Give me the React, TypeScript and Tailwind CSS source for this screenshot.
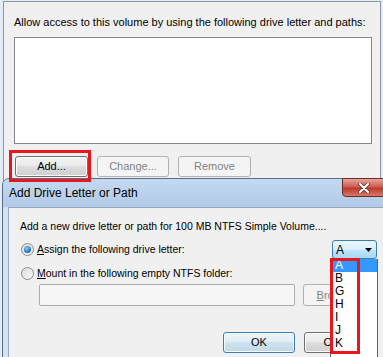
import React from 'react'

const btnBase =
  'flex items-center justify-center rounded-[3px] border text-[11px] leading-[13px]'
const btnNormal =
  'border-[#707070] bg-[linear-gradient(#f2f2f2,#ebebeb_50%,#dddddd_50%,#cfcfcf)] shadow-[inset_0_0_0_1px_#fcfcfc] text-black'
const btnDisabled = 'border-[#adb2b5] bg-[#f4f4f4] text-[#838383]'

const Radio = ({ checked }: { checked?: boolean }) => (
  <span className="flex h-[13px] w-[13px] items-center justify-center rounded-full border border-[#8a8a8a] bg-[linear-gradient(135deg,#dcdcdc,#f8f8f8)]">
    {checked && (
      <span className="h-[7px] w-[7px] rounded-full bg-[radial-gradient(circle_at_40%_35%,#8fd0ff_0%,#2a7cc8_55%,#174f8a_100%)]" />
    )}
  </span>
)

const letters = ['A', 'B', 'G', 'H', 'I', 'J', 'K']

export default function App() {
  return (
    <div className="relative h-[357px] w-[383px] overflow-hidden bg-[#e3ecf7] font-['Liberation_Sans',Arial,sans-serif] text-black">
      {/* property page behind the dialog */}
      <div className="ml-[3px] mt-[1px] h-[220px] w-[378px] border border-[#8d96a3] bg-[#f0f0f0] pl-[10px] pt-[14px]">
        <p className="text-[11px] leading-[13px]">
          Allow access to this volume by using the following drive letter and paths:
        </p>
        <div className="mt-[8px] h-[107px] w-[358px] border border-[#828790] bg-white" />
        <div className="ml-[1px] mt-[12px] flex gap-[9px]">
          <button className={`${btnBase} ${btnNormal} h-[21px] w-[73px]`}>Add...</button>
          <button className={`${btnBase} ${btnDisabled} h-[21px] w-[72px]`}>Change...</button>
          <button className={`${btnBase} ${btnDisabled} h-[21px] w-[73px]`}>Remove</button>
        </div>
      </div>

      {/* Add Drive Letter or Path dialog */}
      <div className="absolute left-[2px] top-[178px] h-[200px] w-[420px] rounded-tl-[7px] border border-[#5b6d88] bg-[#d3e1f1]">
        <div className="h-[28px] rounded-tl-[6px] bg-[linear-gradient(#c4d9f0,#b2cae8)] pl-[6px] pt-[7px] text-[12px] leading-[15px]">
          Add Drive Letter or Path
        </div>
        <div className="absolute left-[339px] top-[-1px] flex h-[19px] w-[46px] items-center justify-center rounded-bl-[4px] border border-[#6b2b25] bg-[linear-gradient(#e5a79f,#cf5d50_45%,#c0392b_55%,#d67a6c)]">
          <svg width="12" height="10" viewBox="0 0 12 10" className="ml-[-2px]">
            <path d="M2 1 L10 9 M10 1 L2 9" stroke="#5a2a26" strokeWidth="3.6" strokeLinecap="round" />
            <path d="M2 1 L10 9 M10 1 L2 9" stroke="#ffffff" strokeWidth="2.2" strokeLinecap="round" />
          </svg>
        </div>

        <div className="ml-[5px] h-[200px] border border-[#97a9bf] bg-[#f0f0f0] pl-[11px] pt-[12px] text-[10.5px]">
          <p className="leading-[13px]">Add a new drive letter or path for 100 MB NTFS Simple Volume....</p>

          <div className="mt-[7px] flex h-[19px] w-[357px] items-center">
            <span className="ml-[1px]">
              <Radio checked />
            </span>
            <span className="ml-[3px] leading-[13px]">
              <u className="underline-offset-1">A</u>ssign the following drive letter:
            </span>
            <div className="ml-auto flex h-[19px] w-[45px] items-center justify-between rounded-[3px] border border-[#3c7fb1] bg-[linear-gradient(#eaf6fd,#d9f0fc_50%,#bee6fd_50%,#a7d9f5)] pl-[3px] pr-[4px] text-[12px]">
              <span>A</span>
              <svg width="7" height="4" viewBox="0 0 7 4">
                <path d="M0 0 H7 L3.5 4 Z" fill="#000" />
              </svg>
            </div>
          </div>

          <div className="mt-[7px] flex h-[14px] items-center">
            <span className="ml-[1px]">
              <Radio />
            </span>
            <span className="ml-[3px] leading-[13px]">
              <u className="underline-offset-1">M</u>ount in the following empty NTFS folder:
            </span>
          </div>

          <div className="ml-[19px] mt-[4px] flex">
            <div className="h-[22px] w-[256px] rounded-[2px] border border-[#adadad] bg-[#f6f6f6]" />
            <button className={`${btnBase} ${btnDisabled} ml-[8px] h-[22px] w-[73px] text-[10.5px]`}>
              <span>
                <u className="underline-offset-1">B</u>rowse...
              </span>
            </button>
          </div>

          <div className="ml-[203px] mt-[26px] flex gap-[9px]">
            <button className={`${btnBase} h-[21px] w-[72px] border-[#3c7fb1] bg-[linear-gradient(#eef5fa,#e0ecf4_50%,#cfe2ee_50%,#c0d9ea)] shadow-[inset_0_0_0_1px_#f6fbff] text-[10.5px]`}>
              OK
            </button>
            <button className={`${btnBase} ${btnNormal} h-[21px] w-[73px] text-[10.5px]`}>Cancel</button>
          </div>
        </div>
      </div>

      {/* drive letter drop-down list */}
      <div className="absolute left-[330px] top-[259px] h-[110px] w-[48px] border border-t-0 border-[#646464] bg-white text-[12px] leading-[13px]">
        {letters.map((l, i) => (
          <div key={l} className={i === 0 ? 'bg-[#3399ff] pl-[4px] text-white' : 'pl-[4px] text-[#000]'}>
            {l}
          </div>
        ))}
      </div>

      {/* red highlight annotations */}
      <div className="absolute left-[9px] top-[150px] h-[32px] w-[82px] border-[3px] border-[#e8161d]" />
      <div className="absolute left-[330px] top-[258px] h-[96px] w-[30px] border-[3px] border-[#e8161d]" />
    </div>
  )
}
